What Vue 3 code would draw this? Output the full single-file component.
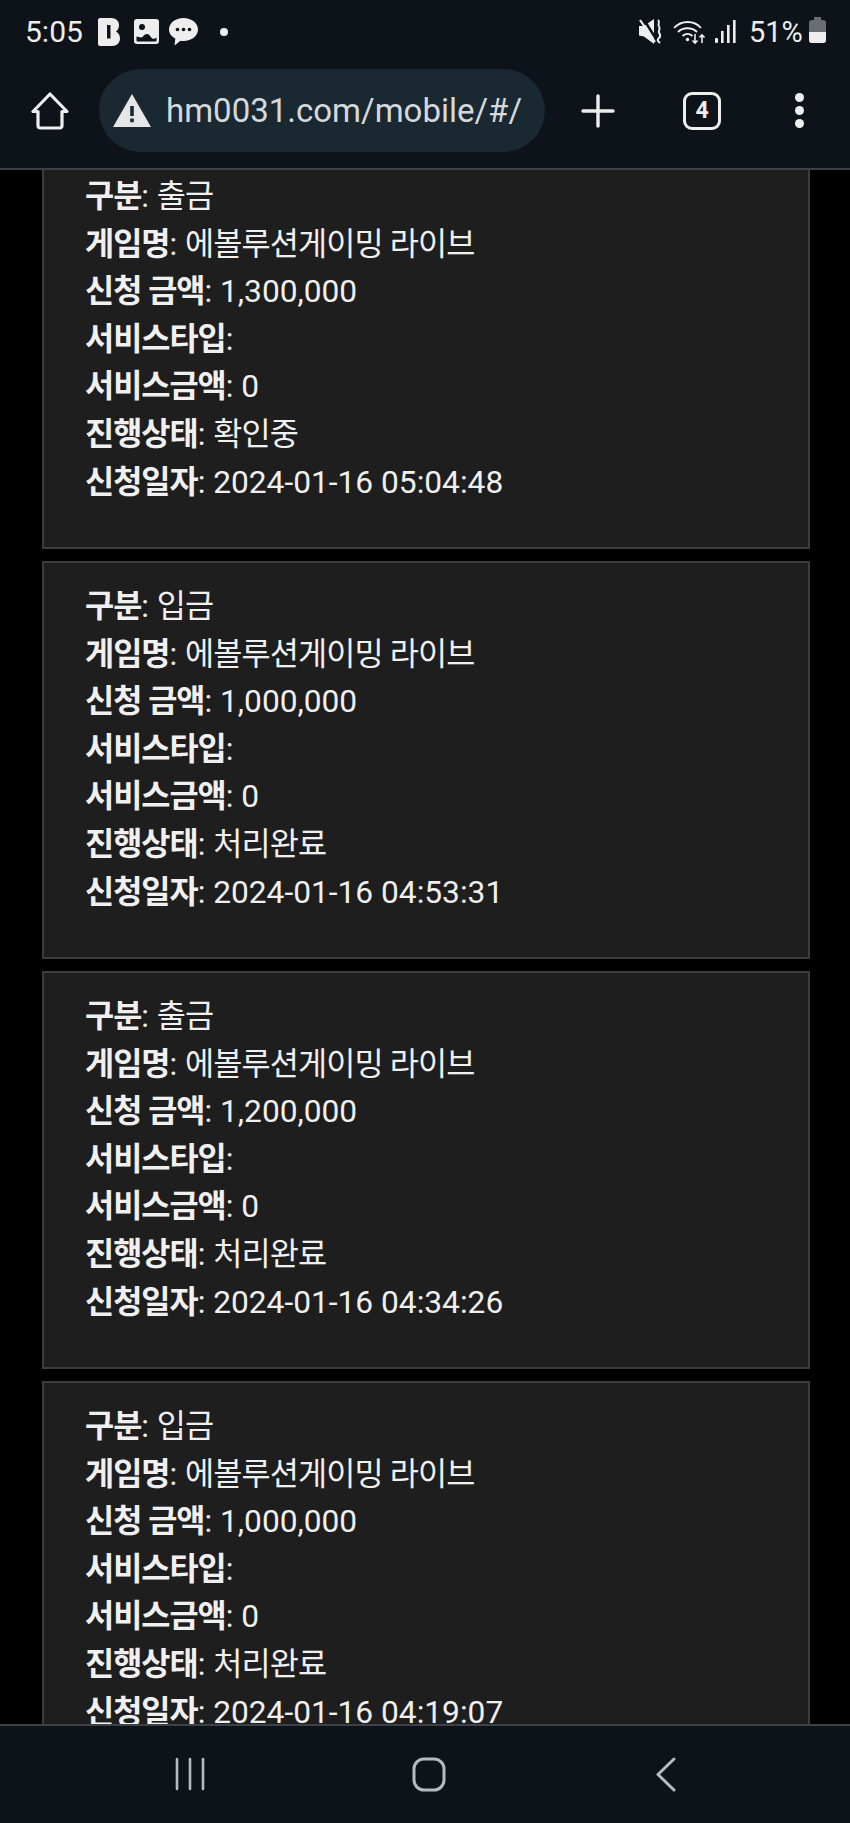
<template>
  <div class="phone">
    <!-- status bar -->
    <div class="status-bar">
      <div class="status-left">
        <span class="time">5:05</span>
        <svg class="ic-b" width="22" height="28" viewBox="0 0 22 28">
          <path fill="#eee" fill-rule="evenodd" d="M2 0h11c5 0 8 3 8 7 0 3-1 5-3 6.500 2.500 1.500 4 3.500 4 7 0 4-3 7.500-8 7.500H2c-1 0-2-1-2-2V2C0 1 1 0 2 0zM9 7v13.500h3.500V7z" />
        </svg>
        <svg class="ic-img" width="25" height="25" viewBox="0 0 25 25">
          <path fill="#eee" fill-rule="evenodd" d="M3 0h19c2 0 3 1 3 3v19c0 2-1 3-3 3H3c-2 0-3-1-3-3V3c0-2 1-3 3-3zM2.500 17.500v4c0 .7.500 1 1 1h18c.5 0 1-.3 1-1v-3l-2.500 1.500c-3 0-4-5-7-5-3 0-4 3.500-6 3.500-1.500 0-2.500-1-4.500-1zM8 5a3 3 0 1 0 0 6 3 3 0 0 0 0-6z" />
        </svg>
        <svg class="ic-chat" width="29" height="28" viewBox="0 0 29 28">
          <path fill="#eee" d="M14.500 0C22.500 0 29 5 29 11.500S22.500 23 14.500 23c-1 0-2 0-3-.2L5.500 27.500l.8-7C2.500 18.500 0 15.300 0 11.500 0 5 6.500 0 14.500 0z" />
          <circle cx="8.500" cy="11.500" r="1.800" fill="#0d1318" />
          <circle cx="14.500" cy="11.500" r="1.800" fill="#0d1318" />
          <circle cx="20.500" cy="11.500" r="1.800" fill="#0d1318" />
        </svg>
        <span class="dot"></span>
      </div>
      <div class="status-right">
        <svg class="ic-mute" width="24" height="25" viewBox="0 0 24 25">
          <path fill="#eee" d="M0 7h5l10-7v25L5 17.500l-5-1z" />
          <path fill="none" stroke="#0d1318" stroke-width="2.500" d="M4 -1l13 21" />
          <path fill="none" stroke="#eee" stroke-width="2.200" d="M1 1l15 22" />
          <path fill="none" stroke="#eee" stroke-width="2" d="M19 1c3 2.500-1 4 1 6.500s-1 4 0 6 2.500 3.500 0 5.500-1 3 1 5" />
        </svg>
        <svg class="ic-wifi" width="33" height="26" viewBox="0 0 33 26">
          <g fill="none" stroke="#eee" stroke-width="1.800">
            <path d="M1 9c7.500-8 20-8 27 0" />
            <path d="M5 13c5-5 14-5 19 0" />
            <path d="M9.500 17c3-2.500 7-2.500 10 0" />
          </g>
          <circle cx="14.500" cy="20.500" r="1.700" fill="#eee" />
          <path fill="none" stroke="#eee" stroke-width="1.600" d="M22 15v9m-2.500-2.500L22 24l2.500-2.500M29 24v-8m-2.500 2.500L29 16l2.500 2.500" />
        </svg>
        <svg class="ic-signal" width="21" height="23" viewBox="0 0 21 23">
          <g fill="#eee">
            <rect x="0" y="18" width="3" height="5" rx="1" />
            <rect x="6" y="11" width="2.600" height="12" />
            <rect x="12" y="5" width="2.600" height="18" />
            <rect x="18" y="0" width="2.600" height="23" />
          </g>
        </svg>
        <span class="battery-text">51%</span>
        <div class="battery"><span class="battery-fill"></span></div>
      </div>
    </div>

    <!-- browser toolbar -->
    <div class="toolbar">
      <svg class="ic-home" width="38" height="38" viewBox="0 0 38 38">
        <path fill="none" stroke="#eee" stroke-width="3.200" stroke-linejoin="round" d="M19 2L2 19.500h5v14c0 1.500 1 2.500 2.500 2.500h19c1.500 0 2.500-1 2.500-2.500v-14h5z" />
      </svg>
      <div class="url-pill">
        <svg class="ic-warn" width="38" height="33" viewBox="0 0 38 33">
          <path fill="#e6e6e6" fill-rule="evenodd" d="M19 0l19 33H0zM17.200 12v10h3.600V12zM17.200 24.500v3.700h3.600v-3.700z" />
        </svg>
        <span class="url">hm0031.com/mobile/#/</span>
      </div>
      <svg class="ic-plus" width="34" height="34" viewBox="0 0 34 34">
        <path fill="none" stroke="#eee" stroke-width="3.400" stroke-linecap="round" d="M17 2v30M2 17h30" />
      </svg>
      <div class="tabs">4</div>
      <div class="menu"><span></span><span></span><span></span></div>
    </div>

    <!-- scrolled list -->
    <main class="content">
      <section v-for="(item, index) in items" :key="index" class="card">
        <p v-for="row in rowsOf(item)" :key="row.label" class="row">
          <b>{{ row.label }}</b>: <span :class="{ ko: row.ko }">{{ row.value }}</span>
        </p>
      </section>
    </main>

    <!-- android nav -->
    <div class="nav-bar">
      <svg width="32" height="34" viewBox="0 0 32 34">
        <path fill="none" stroke="#b8bbbd" stroke-width="2.600" stroke-linecap="round" d="M3 2v30M16 2v30M29 2v30" />
      </svg>
      <svg class="nav-home" width="34" height="35" viewBox="0 0 34 35">
        <rect x="2" y="2" width="30" height="31" rx="10" fill="none" stroke="#b8bbbd" stroke-width="3" />
      </svg>
      <svg width="20" height="35" viewBox="0 0 20 35">
        <path fill="none" stroke="#b8bbbd" stroke-width="3" stroke-linecap="round" stroke-linejoin="round" d="M18 2L2 17.500 18 33" />
      </svg>
    </div>
  </div>
</template>

<script setup>
const items = [
  { type: "출금", amount: "1,300,000", status: "확인중", date: "2024-01-16 05:04:48" },
  { type: "입금", amount: "1,000,000", status: "처리완료", date: "2024-01-16 04:53:31" },
  { type: "출금", amount: "1,200,000", status: "처리완료", date: "2024-01-16 04:34:26" },
  { type: "입금", amount: "1,000,000", status: "처리완료", date: "2024-01-16 04:19:07" },
];

function rowsOf(item) {
  return [
    { label: "구분", value: item.type, ko: true },
    { label: "게임명", value: "에볼루션게이밍 라이브", ko: true },
    { label: "신청 금액", value: item.amount },
    { label: "서비스타입", value: "" },
    { label: "서비스금액", value: "0" },
    { label: "진행상태", value: item.status, ko: true },
    { label: "신청일자", value: item.date },
  ];
}
</script>

<style>
html,
body {
  margin: 0;
  background: #000;
}
</style>

<style scoped>
.phone {
  display: flex;
  flex-direction: column;
  width: 850px;
  height: 1823px;
  overflow: hidden;
  background: #000;
  color: #eee;
  font-family: Roboto, "Noto Sans CJK KR", sans-serif;
}

/* status bar */
.status-bar {
  flex: none;
  height: 63px;
  display: flex;
  justify-content: space-between;
  align-items: center;
  padding: 0 24px 0 25px;
  background: #0d1318;
}

.status-left,
.status-right {
  display: flex;
  align-items: center;
}

.time {
  font-size: 30px;
  width: 73px;
}

.ic-img {
  margin-left: 14px;
}

.ic-chat {
  margin-left: 10px;
}

.dot {
  width: 8px;
  height: 8px;
  margin-left: 22px;
  border-radius: 50%;
  background: #eee;
}

.ic-wifi {
  margin-left: 10px;
}

.ic-signal {
  margin-left: 9px;
}

.battery-text {
  margin-left: 13px;
  font-size: 29px;
  width: 60px;
}

.battery {
  position: relative;
  width: 17px;
  height: 23px;
  border-radius: 3px;
  background: #6a6e72;
}

.battery::before {
  content: "";
  position: absolute;
  top: -3px;
  left: 5px;
  width: 7px;
  height: 3px;
  background: #6a6e72;
}

.battery-fill {
  position: absolute;
  left: 0;
  right: 0;
  bottom: 0;
  height: 11px;
  border-radius: 0 0 3px 3px;
  background: #eee;
}

/* toolbar */
.toolbar {
  flex: none;
  height: 107px;
  box-sizing: border-box;
  display: flex;
  align-items: center;
  padding: 0 0 10px 31px;
  background: #0d1318;
  border-bottom: 2px solid #3d4248;
}

.ic-home {
  flex: none;
}

.url-pill {
  flex: none;
  width: 446px;
  height: 83px;
  margin-left: 30px;
  display: flex;
  align-items: center;
  padding-left: 14px;
  box-sizing: border-box;
  border-radius: 42px;
  background: #1a2832;
}

.url {
  margin-left: 15px;
  font-size: 33px;
  color: #d5d9dc;
  white-space: nowrap;
}

.ic-plus {
  flex: none;
  margin-left: 36px;
}

.tabs {
  flex: none;
  width: 38px;
  height: 38px;
  margin-left: 68px;
  box-sizing: border-box;
  border: 3.5px solid #eee;
  border-radius: 9px;
  font-size: 23px;
  font-weight: 700;
  line-height: 31px;
  text-align: center;
}

.menu {
  flex: none;
  display: flex;
  flex-direction: column;
  gap: 4px;
  margin-left: 74px;
}

.menu span {
  width: 9px;
  height: 9px;
  border-radius: 50%;
  background: #eee;
}

/* list */
.content {
  flex: 1;
  min-height: 0;
  overflow: hidden;
  padding: 0 40px 0 42px;
}

.card {
  height: 398px;
  box-sizing: border-box;
  margin-bottom: 12px;
  padding: 20px 41px 0;
  background: #1e1e1e;
  border: 2px solid #3c3c3c;
}

.card:first-child {
  margin-top: -19px;
}

.row {
  margin: 0;
  height: 47.6px;
  font-size: 31.7px;
  line-height: 47.6px;
  white-space: nowrap;
  color: #f0f0f0;
}

.row b {
  font-weight: 700;
  letter-spacing: -1px;
}

.row .ko {
  letter-spacing: -0.9px;
}

/* nav bar */
.nav-bar {
  flex: none;
  height: 99px;
  box-sizing: border-box;
  display: flex;
  align-items: flex-start;
  padding: 31px 174px 0 174px;
  justify-content: space-between;
  background: #0d1318;
  border-top: 2px solid #3d4248;
}

.nav-home {
  margin-left: -5px;
}
</style>
